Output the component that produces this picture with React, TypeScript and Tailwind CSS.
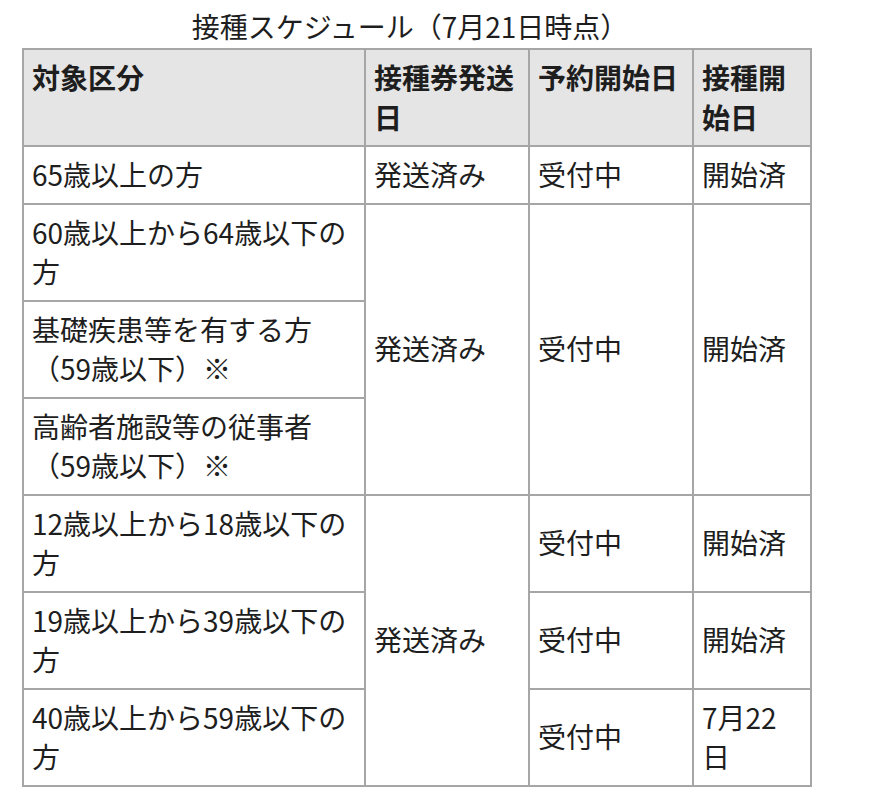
import React from "react";

const font = { fontFamily: '"Noto Sans CJK JP", "Noto Sans", sans-serif' };

const thCls = "border-2 border-[#a6a6a6] bg-[#e5e5e5] px-[8px] py-[8px] text-left align-top font-bold";
const tdCls = "border-2 border-[#a6a6a6] px-[8px] py-[8px] text-left align-middle font-normal";

export default function App() {
  return (
    <div className="min-h-screen bg-white pt-[6px] text-[#1e1e1e]" style={font}>
      <table className="ml-[22px] w-[788px] table-fixed border-collapse text-[28px] leading-[39.5px]">
        <caption className="pb-[2px] pr-[14px] text-center text-[28px] leading-[40px]">接種スケジュール（7月21日時点）</caption>
        <colgroup>
          <col className="w-[342px]" />
          <col className="w-[164px]" />
          <col className="w-[164px]" />
          <col className="w-[118px]" />
        </colgroup>
        <thead>
          <tr>
            <th className={thCls}>対象区分</th>
            <th className={thCls}>接種券発送日</th>
            <th className={thCls}>予約開始日</th>
            <th className={thCls}>接種開始日</th>
          </tr>
        </thead>
        <tbody>
          <tr>
            <td className={tdCls}>65歳以上の方</td>
            <td className={tdCls}>発送済み</td>
            <td className={tdCls}>受付中</td>
            <td className={tdCls}>開始済</td>
          </tr>
          <tr>
            <td className={tdCls}>60歳以上から64歳以下の方</td>
            <td className={tdCls} rowSpan={3}>発送済み</td>
            <td className={tdCls} rowSpan={3}>受付中</td>
            <td className={tdCls} rowSpan={3}>開始済</td>
          </tr>
          <tr>
            <td className={tdCls}>基礎疾患等を有する方（59歳以下）※</td>
          </tr>
          <tr>
            <td className={tdCls}>高齢者施設等の従事者（59歳以下）※</td>
          </tr>
          <tr>
            <td className={tdCls}>12歳以上から18歳以下の方</td>
            <td className={tdCls} rowSpan={3}>発送済み</td>
            <td className={tdCls}>受付中</td>
            <td className={tdCls}>開始済</td>
          </tr>
          <tr>
            <td className={tdCls}>19歳以上から39歳以下の方</td>
            <td className={tdCls}>受付中</td>
            <td className={tdCls}>開始済</td>
          </tr>
          <tr>
            <td className={tdCls}>40歳以上から59歳以下の方</td>
            <td className={tdCls}>受付中</td>
            <td className={tdCls}>7月22日</td>
          </tr>
        </tbody>
      </table>
    </div>
  );
}
